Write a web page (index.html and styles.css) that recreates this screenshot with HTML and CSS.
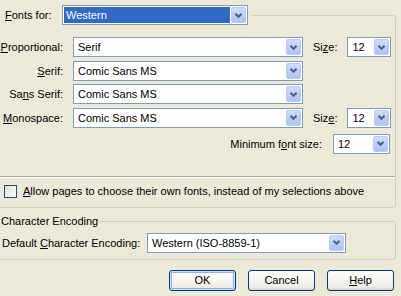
FILE: index.html
```html
<!DOCTYPE html>
<html lang="en">
<head>
    <meta charset="UTF-8">
    <title>Fonts</title>
    <link rel="stylesheet" href="styles.css">
</head>
<body>

    <fieldset class="group fonts-group">
        <legend class="fonts-for">
            <label class="caption-label"><u>F</u>onts for:</label>
            <div class="combo combo-lang combo-focus">
                <span class="combo-value">Western</span>
                <span class="combo-drop"><svg width="7" height="5" viewBox="0 0 7 5"><path d="M0.5 0.8 L3.5 3.8 L6.5 0.8" fill="none" stroke="#4D6185" stroke-width="2"/></svg></span>
            </div>
        </legend>

        <div class="font-grid">
            <label class="row-label"><u>P</u>roportional:</label>
            <div class="combo">
                <span class="combo-value">Serif</span>
                <span class="combo-drop"><svg width="7" height="5" viewBox="0 0 7 5"><path d="M0.5 0.8 L3.5 3.8 L6.5 0.8" fill="none" stroke="#4D6185" stroke-width="2"/></svg></span>
            </div>
            <label class="size-label">Si<u>z</u>e:</label>
            <div class="combo">
                <span class="combo-value">12</span>
                <span class="combo-drop"><svg width="7" height="5" viewBox="0 0 7 5"><path d="M0.5 0.8 L3.5 3.8 L6.5 0.8" fill="none" stroke="#4D6185" stroke-width="2"/></svg></span>
            </div>

            <label class="row-label"><u>S</u>erif:</label>
            <div class="combo">
                <span class="combo-value">Comic Sans MS</span>
                <span class="combo-drop"><svg width="7" height="5" viewBox="0 0 7 5"><path d="M0.5 0.8 L3.5 3.8 L6.5 0.8" fill="none" stroke="#4D6185" stroke-width="2"/></svg></span>
            </div>
            <span></span>
            <span></span>

            <label class="row-label">Sa<u>n</u>s Serif:</label>
            <div class="combo">
                <span class="combo-value">Comic Sans MS</span>
                <span class="combo-drop"><svg width="7" height="5" viewBox="0 0 7 5"><path d="M0.5 0.8 L3.5 3.8 L6.5 0.8" fill="none" stroke="#4D6185" stroke-width="2"/></svg></span>
            </div>
            <span></span>
            <span></span>

            <label class="row-label"><u>M</u>onospace:</label>
            <div class="combo">
                <span class="combo-value">Comic Sans MS</span>
                <span class="combo-drop"><svg width="7" height="5" viewBox="0 0 7 5"><path d="M0.5 0.8 L3.5 3.8 L6.5 0.8" fill="none" stroke="#4D6185" stroke-width="2"/></svg></span>
            </div>
            <label class="size-label">Siz<u>e</u>:</label>
            <div class="combo">
                <span class="combo-value">12</span>
                <span class="combo-drop"><svg width="7" height="5" viewBox="0 0 7 5"><path d="M0.5 0.8 L3.5 3.8 L6.5 0.8" fill="none" stroke="#4D6185" stroke-width="2"/></svg></span>
            </div>
        </div>

        <div class="min-size">
            <label>Minimum f<u>o</u>nt size:</label>
            <div class="combo combo-min">
                <span class="combo-value">12</span>
                <span class="combo-drop"><svg width="7" height="5" viewBox="0 0 7 5"><path d="M0.5 0.8 L3.5 3.8 L6.5 0.8" fill="none" stroke="#4D6185" stroke-width="2"/></svg></span>
            </div>
        </div>

        <hr class="groove">

        <label class="check-row">
            <span class="checkbox"></span>
            <span><u>A</u>llow pages to choose their own fonts, instead of my selections above</span>
        </label>
    </fieldset>

    <fieldset class="group encoding-group">
        <legend class="encoding-caption">Character Encoding</legend>
        <div class="encoding-row">
            <label class="encoding-label">Default <u>C</u>haracter Encoding:</label>
            <div class="combo combo-encoding">
                <span class="combo-value">Western (ISO-8859-1)</span>
                <span class="combo-drop"><svg width="7" height="5" viewBox="0 0 7 5"><path d="M0.5 0.8 L3.5 3.8 L6.5 0.8" fill="none" stroke="#4D6185" stroke-width="2"/></svg></span>
            </div>
        </div>
    </fieldset>

    <div class="buttons">
        <button class="btn btn-default">OK</button>
        <button class="btn">Cancel</button>
        <button class="btn"><u>H</u>elp</button>
    </div>

</body>
</html>
```

FILE: styles.css
```css
body {
    margin: 0;
    background: #ECE9D8; /* XP dialog face */
    font-family: "Liberation Sans", Arial, sans-serif;
    font-size: 11px;
    color: #000;
    overflow: hidden;
}

u {
    text-decoration-thickness: 1px;
    text-underline-offset: 1px;
}

/* group boxes */
.group {
    border: 1px solid #D0D0BF;
    border-radius: 3px;
    margin: 0 5px 0 -5px;
    padding: 0 5px 0 4px;
    min-width: 0;
}

.fonts-group {
    margin-top: 5px;
    padding-top: 12px;
    padding-bottom: 9px;
}

.fonts-for {
    display: flex;
    align-items: center;
    padding: 0 3px 0 5px;
    height: 20px;
}

.caption-label {
    width: 57px;
}

.combo-lang {
    width: 186px;
}

/* combo boxes */
.combo {
    display: flex;
    height: 20px;
    box-sizing: border-box;
    border: 1px solid #7F9DB9;
    background: #fff;
    padding: 1px;
}

.combo-value {
    flex: 1;
    display: flex;
    align-items: center;
    padding-left: 3px;
    white-space: nowrap;
    overflow: hidden;
}

.combo-focus .combo-value {
    background: #316AC5;
    color: #fff;
    margin-right: 1px;
    padding-left: 2px;
}

.combo-drop {
    width: 15px;
    display: flex;
    align-items: center;
    justify-content: center;
    box-sizing: border-box;
    border: 1px solid #BACBF3;
    border-radius: 2px;
    background: linear-gradient(to bottom, #D0DCFB 0%, #BCCEF8 50%, #AFC4F5 100%);
}

/* font rows */
.font-grid {
    display: grid;
    grid-template-columns: 63px 230px 1fr 44px;
    grid-auto-rows: 20px;
    column-gap: 10px;
    row-gap: 3.67px;
}

.row-label {
    display: flex;
    align-items: center;
    justify-content: flex-end;
    white-space: nowrap;
}

.size-label {
    display: flex;
    align-items: center;
    white-space: nowrap;
}

.min-size {
    display: flex;
    justify-content: flex-end;
    align-items: center;
    gap: 11px;
    margin-top: 6px;
}

.combo-min {
    width: 57px;
}

.groove {
    border: none;
    border-top: 1px solid #ACA899;
    border-bottom: 1px solid #fff;
    margin: 22px -5px 0 -4px;
}

.check-row {
    display: flex;
    align-items: center;
    gap: 6px;
    margin: 7px 0 0 4px;
    white-space: nowrap;
}

.checkbox {
    width: 13px;
    height: 13px;
    box-sizing: border-box;
    border: 1px solid #1C5180;
    background: linear-gradient(135deg, #DCDCD7 0%, #F2F2EF 60%, #fff 100%);
}

/* encoding */
.encoding-group {
    margin-top: 7px;
    padding-top: 5px;
    padding-bottom: 6px;
}

.encoding-caption {
    padding: 0 2px 0 1px;
    line-height: 13px;
}

.encoding-row {
    display: flex;
    align-items: center;
}

.encoding-label {
    width: 145px;
    padding-left: 2px;
    white-space: nowrap;
}

.combo-encoding {
    width: 199px;
}

/* dialog buttons */
.buttons {
    display: flex;
    justify-content: flex-end;
    gap: 12px;
    margin: 10px 7px 0 0;
}

.btn {
    width: 67px;
    height: 21px;
    padding: 0;
    border: 1px solid #003C74;
    border-radius: 3px;
    background: linear-gradient(to bottom, #FFFFFF 0%, #F5F4F0 55%, #ECEBE6 85%, #D6D0C5 100%);
    font-family: inherit;
    font-size: 11px;
    color: #000;
}

.btn-default {
    box-shadow: inset 0 0 0 1px #CEDDF9, inset 0 0 0 2px #8FB0EB;
}
```
